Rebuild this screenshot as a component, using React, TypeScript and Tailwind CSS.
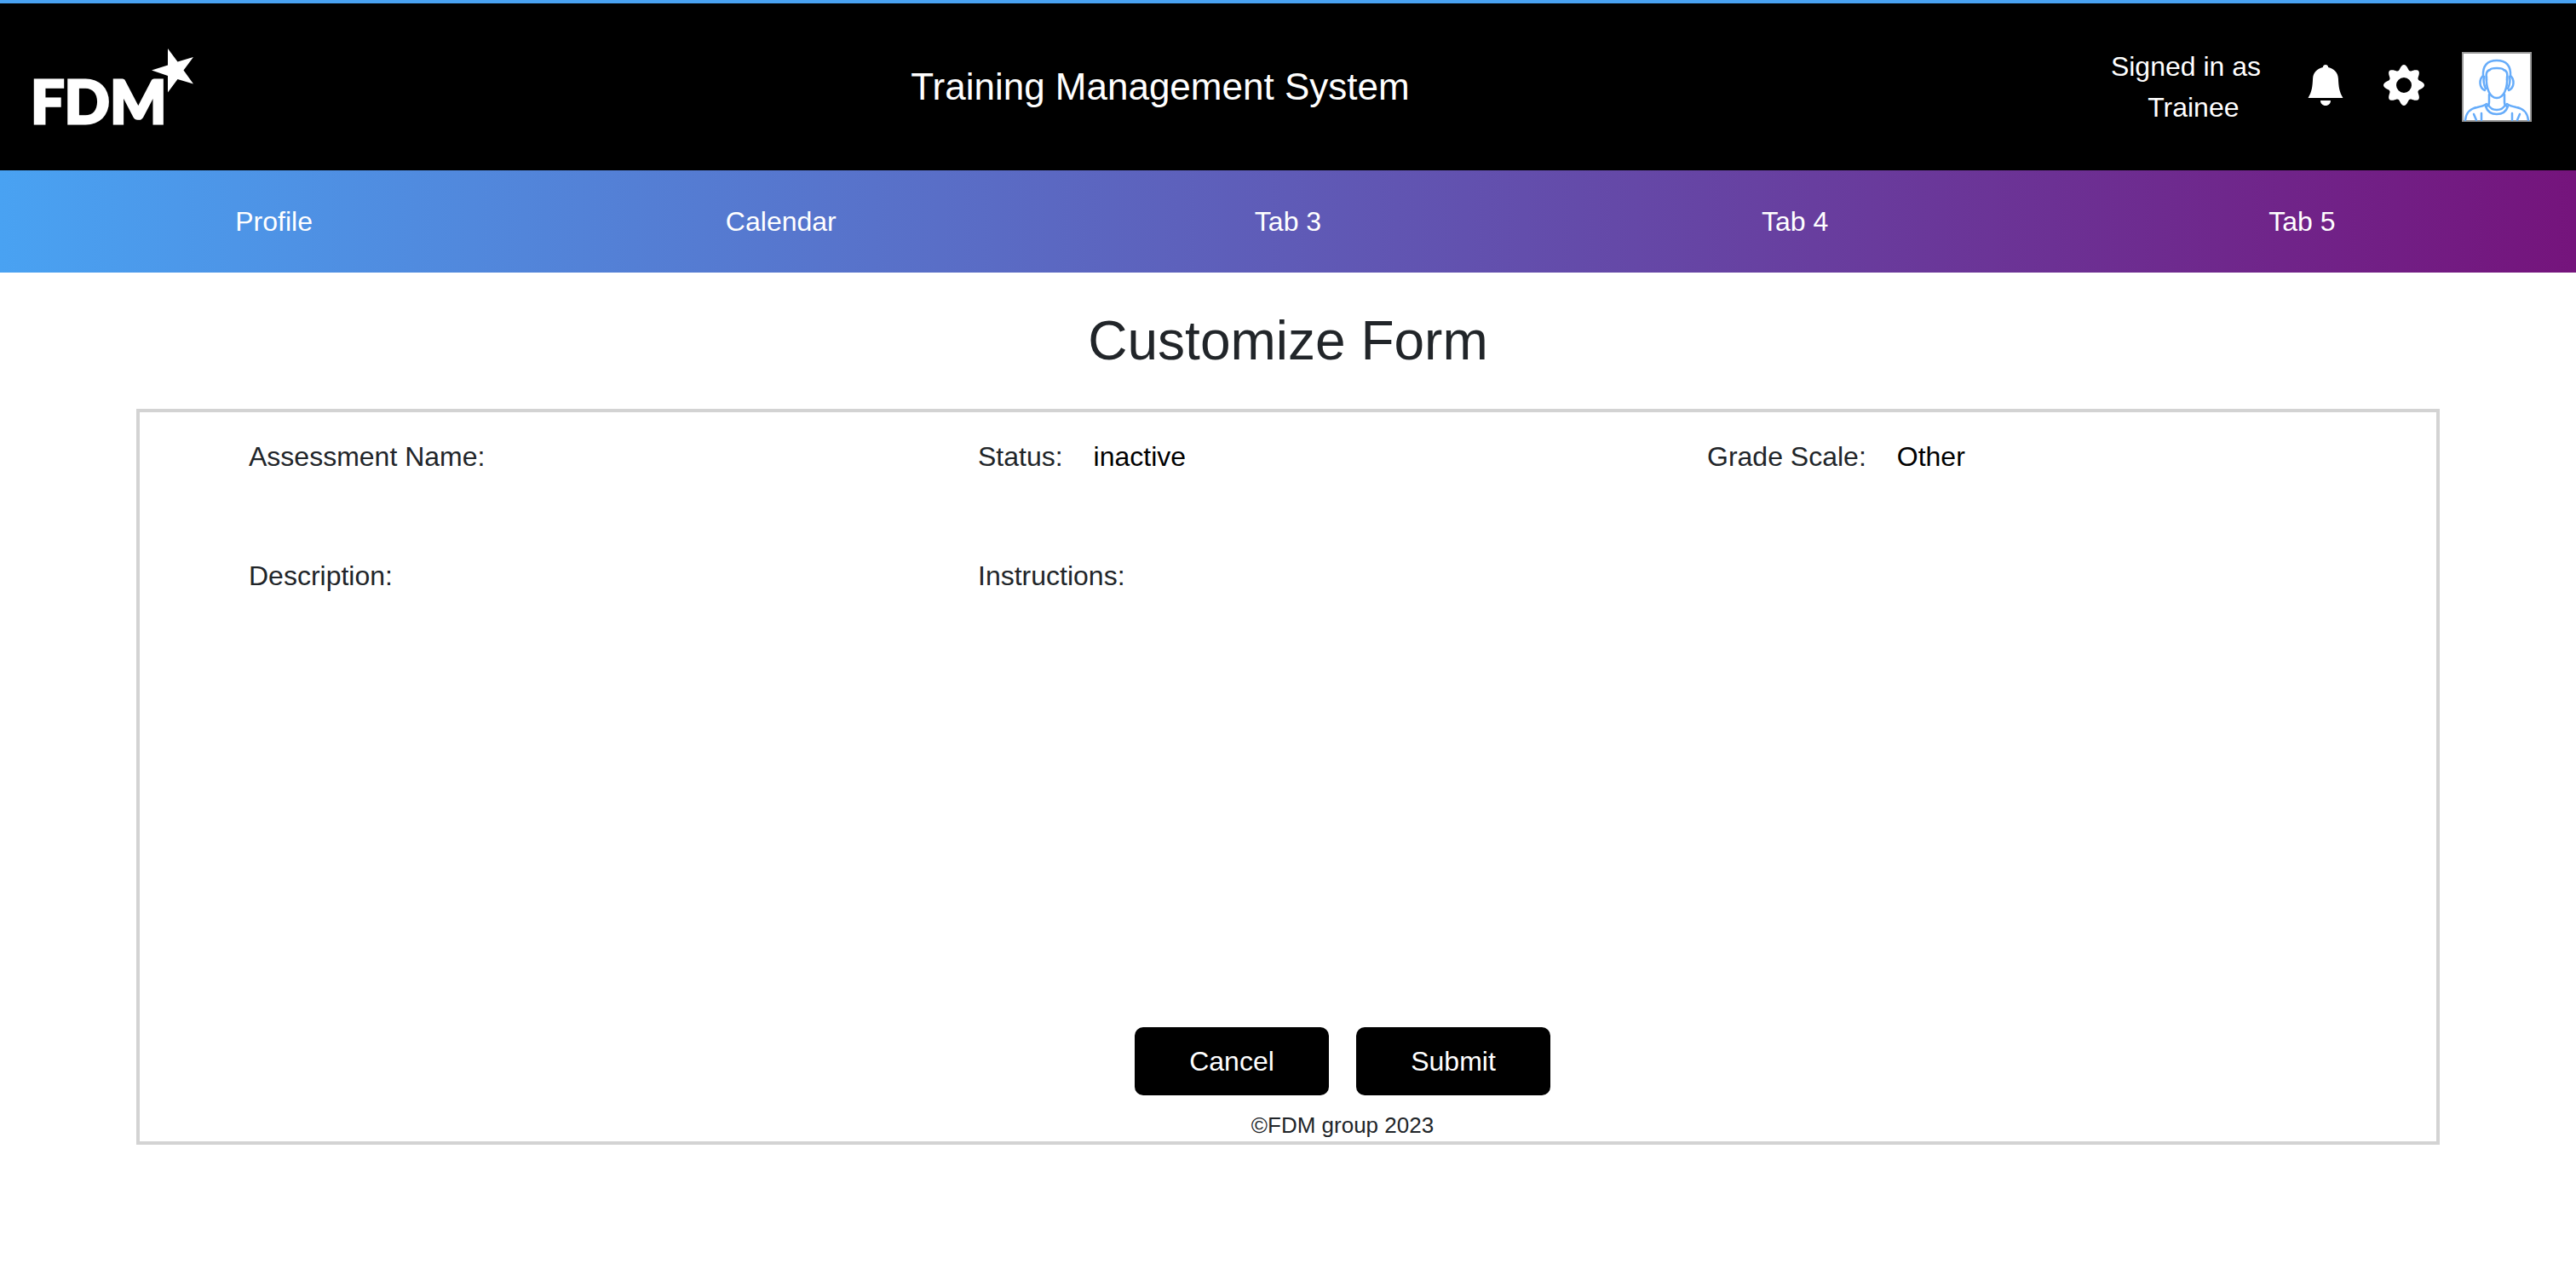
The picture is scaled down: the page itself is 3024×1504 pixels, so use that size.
import React from "react";

const tabs = ["Profile", "Calendar", "Tab 3", "Tab 4", "Tab 5"];

const fields: { label: string; value?: string }[] = [
  { label: "Assessment Name:" },
  { label: "Status:", value: "inactive" },
  { label: "Grade Scale:", value: "Other" },
  { label: "Description:" },
  { label: "Instructions:" },
];

function Logo() {
  return (
    <svg viewBox="-10 0 216 196" className="h-[196px] w-[216px] shrink-0" role="img" aria-label="FDM">
      <text
        x="-4"
        y="141"
        fill="#fff"
        stroke="#fff"
        strokeWidth="3"
        fontFamily="Lato, sans-serif"
        fontWeight="900"
        fontSize="70"
      >
        FDM
      </text>
      <path
        fill="#fff"
        d="M157 53 L168.500 68.500 L187 63 L175.500 78.500 L187 94.500 L168.500 89 L157 104.500 L157 85 L138 78.500 L157 72.500 Z"
      />
    </svg>
  );
}

function BellIcon() {
  return (
    <svg viewBox="0 0 48 48" className="size-12" fill="#fff" aria-hidden="true">
      <path d="M24 0c1.700 0 3 1.100 3.200 2.900C33.700 4.300 38.500 9 38.900 16c.5 10 1.100 15.500 5.600 23H3.500C8 31.500 8.600 26 9.100 16 9.500 9 14.300 4.300 20.800 2.900 21 1.100 22.300 0 24 0Z" />
      <path d="M18 42h12c0 3.500-2.500 6-6 6s-6-2.500-6-6Z" />
    </svg>
  );
}

// Outline of an eight-toothed gear with rounded teeth, centred on (24, 24).
const gearOutline =
  "M" +
  Array.from({ length: 144 }, (_, i) => {
    const angle = (i / 144) * 2 * Math.PI;
    const radius = 21 + 3 * Math.cos(8 * angle);
    return `${(24 + radius * Math.sin(angle)).toFixed(2)} ${(24 - radius * Math.cos(angle)).toFixed(2)}`;
  }).join("L") +
  "Z";

function GearIcon() {
  return (
    <svg viewBox="0 0 48 48" className="size-12" fill="#fff" aria-hidden="true">
      <path fillRule="evenodd" d={gearOutline + "M24 15a9 9 0 1 0 0 18 9 9 0 0 0 0-18Z"} />
    </svg>
  );
}

function Avatar() {
  return (
    <svg viewBox="0 0 82 82" className="size-[82px]" role="img" aria-label="Trainee">
      <rect x="1" y="1" width="80" height="80" fill="#fff" stroke="#999" strokeWidth="2" />
      <g fill="none" stroke="#66acfa" strokeWidth="2.5" strokeLinecap="round" strokeLinejoin="round">
        <path d="M25 29C24 16 30 10 41 10s17 6 16 19" />
        <path d="M29 33c-1-8 0-11 4-12 1-2 4-2 8-2s7 0 8 2c4 1 5 4 4 12" />
        <path d="M29 29c-1 14 4 25 12 25s13-11 12-25" />
        <path d="M25 28c-5 4-5 14 2 17M57 28c5 4 5 14-2 17" />
        <path d="M26 29c-1 5 0 10 2 14M56 29c1 5 0 10-2 14" />
        <path d="M32 50v9c0 3-1 4-3 5M50 50v9c0 3 1 4 3 5" />
        <path d="M4 80c1-9 7-14 14-15 5-1 8-2 11-4M78 80c-1-9-7-14-14-15-5-1-8-2-11-4" />
        <path d="M28 64c2 6 7 9 13 9s11-3 13-9M31 62c2 4 5 6 10 6s8-2 10-6" />
        <path d="M14 73l3 7M23 72v8M68 73l-3 7M59 72v8" />
      </g>
    </svg>
  );
}

export default function App() {
  return (
    <div className="bg-white font-['Liberation_Sans',Arial,sans-serif] text-[32px] leading-[48px] text-[#212529]">
      <header className="flex items-center border-t-4 border-[#49a2f2] bg-black pr-[52px] pl-[30px] text-white">
        <Logo />
        <p className="flex-1 text-center text-[44px] leading-[66px]">Training Management System</p>
        <div className="flex items-center gap-11">
          <p className="mr-2 text-center">
            Signed in as
            <br />
            &nbsp;&nbsp;Trainee
          </p>
          <button type="button" aria-label="Notifications" className="pb-1">
            <BellIcon />
          </button>
          <button type="button" aria-label="Settings" className="pb-1">
            <GearIcon />
          </button>
          <button type="button" aria-label="Account">
            <Avatar />
          </button>
        </div>
      </header>

      <nav className="grid grid-cols-5 bg-linear-[90deg,#49a2f2,#75147c] px-6 py-9 text-center text-white">
        {tabs.map((tab) => (
          <a key={tab} href="#">
            {tab}
          </a>
        ))}
      </nav>

      <main className="px-40">
        <h1 className="py-10 text-center text-[64px] leading-[80px]">Customize Form</h1>
        <form className="border-4 border-[#d3d3d3] pl-32">
          <dl className="grid grid-cols-3 pt-7">
            {fields.map((field) => (
              <div key={field.label} className="flex h-[140px] gap-9">
                <dt>{field.label}</dt>
                {field.value && <dd className="text-black">{field.value}</dd>}
              </div>
            ))}
          </dl>
          <div className="mt-[414px] flex justify-center gap-8">
            <button type="button" className="w-[228px] rounded-[10px] bg-black py-4 text-white">
              Cancel
            </button>
            <button type="submit" className="w-[228px] rounded-[10px] bg-black py-4 text-white">
              Submit
            </button>
          </div>
          <footer className="pt-4 text-center text-[26px] leading-[38px]">©FDM group 2023</footer>
        </form>
      </main>
    </div>
  );
}
